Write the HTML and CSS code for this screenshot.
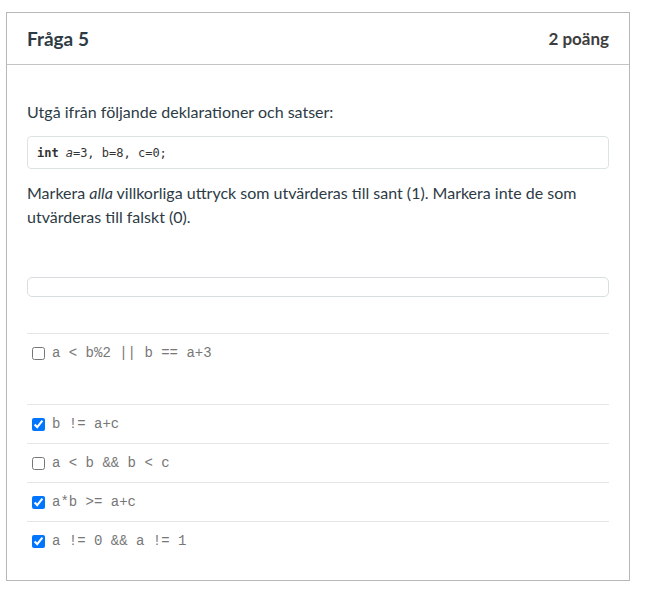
FILE: index.html
```html
<!DOCTYPE html>
<html lang="sv">
<head>
<meta charset="utf-8">
<link rel="stylesheet" href="styles.css">
</head>
<body>
<div class="question">
  <div class="q-header">
    <span class="q-title">Fråga 5</span>
    <span class="q-points">2 poäng</span>
  </div>
  <div class="q-body">
    <p class="text">Utgå ifrån följande deklarationer och satser:</p>
    <pre class="code"><b>int</b> <i>a</i>=3, b=8, c=0;</pre>
    <p class="text para">Markera <em>alla</em> villkorliga uttryck som utvärderas till sant (1). Markera inte de som utvärderas till falskt (0).</p>
    <div class="empty-box"></div>
    <div class="answers">
      <label class="answer first"><input type="checkbox"><span>a &lt; b%2 || b == a+3</span></label>
      <label class="answer"><input type="checkbox" checked><span>b != a+c</span></label>
      <label class="answer"><input type="checkbox"><span>a &lt; b &amp;&amp; b &lt; c</span></label>
      <label class="answer"><input type="checkbox" checked><span>a*b &gt;= a+c</span></label>
      <label class="answer"><input type="checkbox" checked><span>a != 0 &amp;&amp; a != 1</span></label>
    </div>
  </div>
</div>
</body>
</html>
```
FILE: styles.css
```css
html, body {
  margin: 0;
  padding: 0;
  background: #fff;
}
body {
  font-family: Lato, "Open Sans", sans-serif;
  color: #2d3b45;
}
.question {
  margin: 12px 0 0 6px;
  width: 622px;
  border: 1px solid #b8b8b8;
}
.q-header {
  height: 51px;
  border-bottom: 1px solid #c4c4c4;
  padding: 0 20px;
  display: flex;
  align-items: center;
  justify-content: space-between;
  color: #2d3b45;
}
.q-title {
  font-size: 19px;
  font-weight: 700;
}
.q-points {
  font-size: 17px;
  font-weight: 700;
  color: #3d3d3d;
}
.q-body {
  padding: 35px 20px 20px 20px;
}
.text {
  margin: 0;
  font-size: 16px;
  line-height: 24px;
}
.code {
  margin: 12px 0 0 0;
  box-sizing: border-box;
  height: 33px;
  border: 1px solid #dde3e3;
  border-radius: 4px;
  padding: 0 9px;
  display: flex;
  align-items: center;
  font-family: "DejaVu Sans Mono", monospace;
  font-size: 12px;
  color: #333;
}
.code b { font-weight: 700; margin-right: 7px; }
.code i { font-style: italic; }
.para {
  margin-top: 12px;
}
.empty-box {
  margin-top: 48px;
  height: 20px;
  box-sizing: border-box;
  border: 1px solid #d8dee0;
  border-radius: 5px;
}
.answers {
  margin-top: 36px;
}
.answer {
  display: flex;
  align-items: center;
  height: 38px;
  border-top: 1px solid #e6e6e6;
  font-family: "Liberation Mono", monospace;
  font-size: 14px;
  color: #777;
}
.answer.first {
  padding-bottom: 32px;
}
.answer input {
  width: 13px;
  height: 13px;
  margin: 0 7px 0 5px;
}
```
